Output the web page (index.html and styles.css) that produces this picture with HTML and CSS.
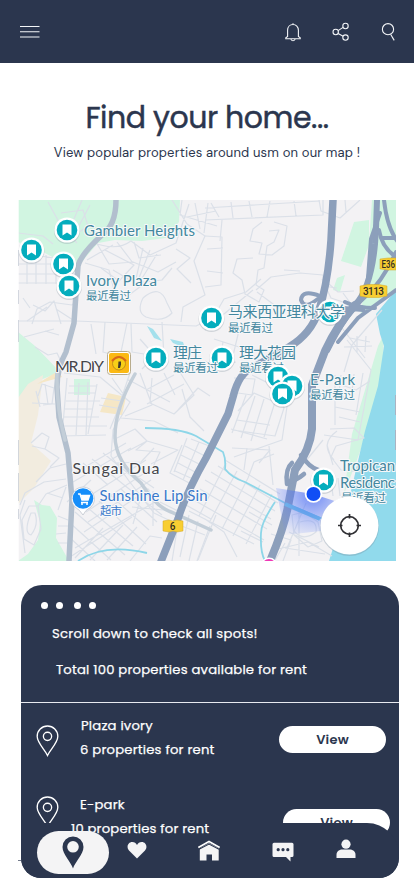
FILE: index.html
```html
<!DOCTYPE html>
<html lang="en">
<head>
<meta charset="utf-8">
<title>Find your home</title>
<link rel="stylesheet" href="styles.css">
</head>
<body>
<header class="topbar">
  <svg class="menu" viewBox="0 0 20 14"><path d="M0 1.5h19.5M0 6.8h19.5M0 12h19.5"/></svg>
  <div class="actions">
    <svg width="18" height="20" viewBox="0 0 18 20"><path d="M9 1.2v1.2M3.6 14.5V8.2C3.600 4.700 6 2.500 9 2.500s5.400 2.200 5.400 5.700v6.300l1.800 1.200v1H1.800v-1zM6.800 17c.5 2.300 3.900 2.300 4.400 0"/></svg>
    <svg width="18" height="20" viewBox="0 0 18 20"><circle cx="3.700" cy="10" r="2.700"/><circle cx="13.500" cy="4" r="2.700"/><circle cx="13.500" cy="15.600" r="2.700"/><path d="M6.100 8.600l5-3.200M6.100 11.400l5 2.800"/></svg>
    <svg width="18" height="20" viewBox="0 0 18 20"><circle cx="8" cy="7.200" r="5.600"/><path d="M10.600 12.200l3.600 6.200"/></svg>
  </div>
</header>
<main>
  <h1 class="title"><span>Find your home...</span></h1>
  <p class="subtitle">View popular properties around usm on our map !</p>
  <svg class="map" viewBox="18 200 378 361">
    <defs>
      <g id="pin"><circle r="13" cy="1" fill="#8c9ba5" opacity=".35"/><circle r="12.600" fill="#fff"/><circle r="10.300" fill="#04adbd"/><path d="M-4.500-5.500h9v11L0 2.500l-4.500 3z" fill="#fff"/></g>
      <radialGradient id="beam" gradientUnits="userSpaceOnUse" cx="313" cy="494" r="48"><stop offset="0" stop-color="#3d63f5" stop-opacity=".75"/><stop offset="1" stop-color="#6f8cf8" stop-opacity=".05"/></radialGradient>
    </defs>
    <rect x="18" y="200" width="378" height="361" fill="#f3f2f4"/>
    <g fill="#d1f5e1">
      <path d="M18 200H180L179 222 166 238 142 241 115 240 98 243 85 258 75 272 65 264 45 253 18 242z"/>
      <path d="M18 332l17 14 25 26-32 13-10 14z"/>
      <path d="M34 500l8 5 8 1 7 12-1 20 13 23H18l10-7 10-14 2-18z"/>
      <path d="M354 222l15-2v25l-8 22-20-6zM337 278l8-3-5 17-7-2zM372 200h24v88l-36 30 7-45zM378 346l6-12-2 45-21 70-17 45 8-60z"/>
      <path d="M74 379h16v16H74z"/>
    </g>
    <path d="M28 384l15-9-5 40-7 28 20 18-17 27-16 16V398z" fill="#f2ecdf"/>
    <path d="M108 393l18 4-4 18-22-3zM37 384l25-7-4-6z" fill="#f5e7c6"/>
    <path d="M396 290l-20 24 4 20 4 12-6 40-13 45-14 60-22 70h67z" fill="#91daec"/>
    <path d="M147 326l6 3 9 12-8-3zM170 339l13 3 2 6-12-5z" fill="#a4e0ec"/>
    <g class="street">
      <path d="M18 233l25 3 10 8M48 202l12 22 17 19M61 213l22-3 5 16-20 14M82 200l-11 26M20 253l47 7M18 264h56M18 274h57M18 283h55M27 250v34M36 253v31M46 255v29M56 257v27M65 257v27M90 205l-18 34"/>
      <path d="M18 321h58l120 5 17-8 11-19 22-7 15-13M92 242q24 10 39-1l19 14 26-12 13-39M87 260l26-15M96 242l13 22 24-2 25 10 18-10M105 250l29 15-15 16-18-13M117 242l16 21M134 242l5 16 22-3M143 248l-7 31M150 250l-11 28M157 254l-16 26M176 249l14 9-13 11 14 14M162 233l24-4M172 200l15 24 18 12-11 25 11 34-22 12-2 15M182 200l-2 15 37 11M187 217l29-6M195 203l5 26M208 203l-4 30"/>
      <path d="M78 300l-6 5-22-3-13 7-5 15M33 305l12 6 9-10 7 23M30 308l-7-10M27 321l20-14M56 309l17 11M85 263l24 7 5 20 15 5 23-17M113 270l22 13 27-3 10-12M143 298q17-15 24 5l5 10q-9 10-26 4-10-5-3-19M105 322l-2 30 17 5 7-34M91 324l5 30M131 324l1 28 24 4M162 322l2 35M140 339l15 17-13 13M35 347l13 8 9-2 7 15M45 331l14 4M24 337l30-8"/>
      <path d="M205 220l118-5v-15M205 208l115-7M211 203l8 14M231 202l2 16M249 201l3 16M270 201l-3 16M294 201l2 15M205 236l17 1-1 48-16 2M207 249l16-1M207 271l16 2M222 220l-2 21M262 222l-9 7-3 12 12 2-3 11 13 1 12-9 3-20-13-4M269 231l10-1-5 12-7 4-3 22-6 2-2 15 8 5-5 12-14-8-3-14-9-7 4-14 16-1M256 290l15-13 29-4 23 2v11l14 2M257 292l20 15 23 10M204 323l20-9 29-24M284 270l16 1"/>
      <path d="M205 330l13-7M214 339l25 8 20 13M223 342l-5 28M240 326l-8 34M205 361l13 5 18-4M350 338l20 4M344 347l28-1M357 336v16M366 336l-1 16M319 200l2 11 19 7 20-18M345 200l1 12M322 279l9 19 18 6M329 284l9 8 16-1M343 293l11 15M382 310l-30 35-8 27M332 315l33 43M347 340l24 30-13 70-34-5"/>
      <path d="M64 373l36 4 30 25-17 28-2 26 18 25 25 32 25 12 26 10M67 378l-5 58 44-1M69 386h28M68 393h27M66 401h34M65 409h28M64 417h35M63 426h44M79 383l-3 52M88 382l-2 53M97 384l-9 50M101 398l21 3M99 405l23 4M112 378l12 17-14 34M130 373l-13 38-3 28M140 373l12 32-27 11M152 378l-2 25 24 11 20-19-16-26M121 418l33 3 24 12M164 373l11 22M146 390l28-15M147 404l37-20M127 379l43 23M178 410l20-22 12 8M182 389l8 28 14 14M117 438l18-9 12 12-11 9 24 2-7 15M128 451l19-10 31 9-27 14M116 463l25-1 13-14"/>
      <path d="M38 396l4-12 12 4-2 16-9 1M32 403l23 1M36 391l4 16M45 384l3 20M31 443l11-10 7 4-4 12-13-3M45 449l14 9-9 9M36 482l14-14 16-4M20 505l5-12 19-11 22-3M25 500l-5 15 5 38M29 506l-7 14 2 19 10 6 7-16-3-23-9 0M31 513q-8 20 0 22 8-10 4-22zM38 506l8-12 21-9M47 493l16 5M58 510l8-23M56 534l10-1M58 516l10 4M58 526h12M58 543h12"/>
      <path d="M73 474l53-31M73 482l58-34M83 500l63-40M86 512l66-44M88 522l63-42M84 532l65-43M75 548l80-46M70 557l62-40M83 463l25 22M92 459l47 38M103 453l47 38M117 463l37 25M91 480l-24 22M82 503l51 43M75 512l50 43M70 523l41 37M68 536l27 25M99 501l47 43M109 494l40 36M121 489l36 33M137 495l25 20M75 558l28-30M90 560l33-35M107 560l30-33M130 561l20-25 12 2M132 507l32 3M140 500l-7 24M153 491v35M160 502l18 9 8-6 25 14M180 511l-8 50M189 515l-9 42M198 521l-9 40M210 526l-13 35"/>
      <path d="M191 439l21 8-17 39-25-13 12-28M185 446l20 10M181 455l20 10M178 463l19 10M175 471l18 8M187 438l-13 34M199 442l-16 38M208 447l-16 37"/>
      <path d="M242 367l30 8 16 25-6 40-48 17M234 378l21 1-3 16-21-3M252 375l26 13 6 20-9 28-42-6M238 411l16-18 21 9-11 35M237 420l33 5M231 429l36 10M246 395l-14 38M255 396l-14 42M264 399l-13 42M232 448l38 2-11 13M225 460l55 34M218 466l60 37M211 472l64 39M205 480l66 39M200 489l67 40M194 500l70 40M189 511l65 33M226 463l-27 53M237 471l-28 52M248 478l-26 51M260 485l-27 51M272 494l-26 50M269 446l4 39M247 448l-3 22M274 454l-20 8-6 16M205 519l19 13 13 25M216 515l-18 45M241 531l22 11M249 512l23 13"/>
      <path d="M335 375v50M336 383l20 7 14-9M335 393l15 7M341 375l-2 18M354 374l-3 26M363 373l-7 42M335 407l25 5M339 417l21 5M330 429l24-1 10 10-28 8-5 11 10 13 20 2M337 431q-18 13-3 29M323 440l-18 22M327 445l6 20M310 466l20 5 3 25M292 515l12-3 14 10 4 19-14 6-14-12zM289 532l30 15M299 511v45M306 503l-19 45M285 548l40 6M278 549l30-7 24 14M275 560l10-17M338 478l2 18M300 522q18-5 16 10-13 10-22-1M271 534l20 6-8 21M283 506l35 12"/>
    </g>
    <g class="canal"><path d="M145 428q35 0 51 8l27 16q3 7 2 17 7 9 20 13l40 21 45 19M78 561q26-18 69-8M275 502q-14 21-14 31-1 19 4 28"/></g>
    <g class="artery">
      <path d="M116 200q0 25-14 35-21 19-24 31l-2 27-2 30-8 29q-9 16-9 35l2 30 9 36 4 47-3 61" stroke-width="5.500" stroke="#b2bfce"/>
      <path d="M57 372q-1 34 8 68M135 374q-20 35-20 62 0 25 26 47 15 24 30 29l40 18" stroke-width="3.500" stroke="#c3ced8"/>
      <path d="M333 200l-2 40q-3 43-12 70-8 24-30 37l-35 20q-15 5-21 30l-5 17-22 44q-20 35-28 61l-18 45" stroke-width="7.500"/>
      <path d="M355 305q-18 20-30 46l-13 34v44q-2 21-17 41l-6 31q-4 25-19 60" stroke-width="8"/>
      <path d="M377 200l-1 28-1 16q-4 44-20 61" stroke-width="6"/>
      <path d="M384 200q3 28 14 42M379 230q3 19 19 28M367 291l4-52 9-26M382 238h15M396 252q-14 30-30 44-20 18-38 55M396 290l-38 28-20 24M319 304q20 4 44 6M320 296q-18-7-19 4 3 9 14 1l8-6M345 302q12 6 30 6" stroke-width="4"/>
      <path d="M301 455q8 12 17 15M292 463q-7 6-5 21M287 482q9-1 17-8" stroke-width="4.500"/>
    </g>
    <path d="M285 504l35 15" stroke="#75c9e4" stroke-width="4"/>
    <path d="M313 494L276 488 285 535 330 530 344 504z" fill="url(#beam)"/>
    <use href="#pin" x="67" y="230"/><use href="#pin" x="31.500" y="250"/><use href="#pin" x="63.500" y="264"/><use href="#pin" x="69" y="286"/>
    <use href="#pin" x="211.500" y="318"/><use href="#pin" x="156" y="358"/><use href="#pin" x="222" y="358"/><use href="#pin" x="330" y="312"/>
    <g class="place">
      <text x="84" y="235.500" textLength="111">Gambier Heights</text>
      <text x="86" y="285.500" textLength="71">Ivory Plaza</text>
      <text x="86" y="300" class="recent" textLength="45">最近看过</text>
      <text x="228" y="317" textLength="117">马来西亚理科大学</text>
      <text x="228" y="331.500" class="recent" textLength="45">最近看过</text>
      <text x="173" y="357.500" textLength="29">理庄</text>
      <text x="173" y="371.500" class="recent" textLength="45">最近看过</text>
      <text x="239" y="357.500" textLength="57">理大花园</text>
      <text x="239" y="371.500" class="recent" textLength="45">最近看过</text>
      <text x="310" y="385" textLength="45">E-Park</text>
      <text x="310" y="399" class="recent" textLength="45">最近看过</text>
      <text x="340" y="471" textLength="55">Tropican</text>
      <text x="340" y="488" textLength="55">Residenc</text>
      <text x="341" y="502" class="recent" textLength="45">最近看过</text>
      <g class="shop"><text x="99.500" y="500.500" textLength="108">Sunshine Lip Sin</text><text x="100" y="515" class="recent" textLength="22">超市</text></g>
      <g class="town"><text x="55" y="371.500" textLength="49">MR.DIY</text><text x="72.500" y="474" textLength="87">Sungai Dua</text></g>
    </g>
    <use href="#pin" x="278" y="377"/><use href="#pin" x="292" y="386"/><use href="#pin" x="282.500" y="394"/><use href="#pin" x="323.500" y="480"/>
    <circle cx="313.500" cy="494" r="8.800" fill="#fff"/><circle cx="313.500" cy="494" r="7" fill="#114ef5"/>
    <rect x="107.500" y="351.500" width="23" height="23" rx="3" fill="#fff" stroke="#b8ac8d"/><rect x="109" y="353" width="20" height="20" rx="2" fill="#fbb914"/>
    <circle cx="119" cy="363.500" r="6.500" fill="#f7cf18" stroke="#b5801c" stroke-width=".8"/><path d="M112 361q7-8 14 0" fill="none" stroke="#d8681c" stroke-width="2"/><path d="M118 368l.5-6.500h2.500v3l-1 3.500" fill="#40392b"/>
    <path d="M83 487a11.800 11.800 0 0 1 8 20q-6 3-8 8-3-5-8-8a11.800 11.800 0 0 1 8-20z" fill="#fff" stroke="#b9bfc9" stroke-width=".7"/><circle cx="83" cy="498.500" r="10.300" fill="#168efa"/><path d="M78 494h2l2 6h6l1.500-4.500h-9M81 502.500h7" stroke="#fff" stroke-width="1.500" fill="none"/><path d="M81 495.500h8.500L88 500h-6z" fill="#fff"/><circle cx="82" cy="504" r="1" fill="#fff"/><circle cx="87" cy="504" r="1" fill="#fff"/>
    <g class="badge">
      <path d="M163 521l6-1 4 1 4-1 6 1v10l-6 1-4-1-4 1-6-1zM360 286l8-1.500h11l8 1.500v10l-8 1.500h-11l-8-1.500zM380 259l8-1h8v12h-8l-8-1z"/>
      <text x="172.500" y="529.800" text-anchor="middle">6</text><text x="373.500" y="294.800" text-anchor="middle" textLength="21">3113</text><text x="381.500" y="268" textLength="13.500" lengthAdjust="spacingAndGlyphs">E36</text>
    </g>
    <circle cx="269" cy="566" r="8.500" fill="#fff"/><circle cx="269" cy="566" r="7" fill="#ef38b6"/>
    <circle cx="349.500" cy="526.500" r="29.500" fill="#7890a0" opacity=".35"/><circle cx="349.500" cy="525.500" r="29" fill="#fff"/>
    <g fill="none" stroke="#303034" stroke-width="1.700"><circle cx="349.500" cy="525.500" r="8.800"/><path d="M349.500 514v4.500M349.500 532.500v4.500M338 525.500h4.500M356.500 525.500h4.500"/></g>
    <path d="M18 200v361" stroke="#fff" stroke-width="1.400"/><path d="M18 250v16M18 290v14M18 320v22M18 440v25M18 473v28M18 509v10M395.500 395v20M395.500 430v20" stroke="#aab3c2"/>
  </svg>
  <section class="card">
    <div class="summary">
      <div class="dots"><i></i><i></i><i></i><i></i></div>
      <p class="hint">Scroll down to check all spots!</p>
      <p class="total">Total 100 properties available for rent</p>
    </div>
    <div class="row">
      <svg class="marker" viewBox="0 0 22 31"><path d="M11 29.500C8.500 24 1 17.500 1 11a10 10 0 0 1 20 0c0 6.500-7.500 13-10 18.500z"/><circle cx="11" cy="11" r="4"/></svg>
      <div class="info"><p class="name-ivory">Plaza ivory</p><p class="count-six">6 properties for rent</p></div>
      <button class="view">View</button>
    </div>
    <div class="row second">
      <svg class="marker" viewBox="0 0 22 31"><path d="M11 29.500C8.500 24 1 17.500 1 11a10 10 0 0 1 20 0c0 6.500-7.500 13-10 18.500z"/><circle cx="11" cy="11" r="4"/></svg>
      <div class="info"><p class="name-epark">E-park</p><p class="count-ten">10 properties for rent</p></div>
      <button class="view">View</button>
    </div>
    <nav class="tabs">
      <a class="active"><svg width="22" height="33" viewBox="0 0 22 33"><path fill-rule="evenodd" d="M11 32.500C9 26 .5 18 .5 11a10.500 10.500 0 0 1 21 0c0 7-8.500 15-10.500 21.500zM11 5a5.800 5.800 0 1 0 0 11.600A5.800 5.800 0 0 0 11 5z"/></svg></a>
      <a class="heart"><svg width="20" height="18" viewBox="0 0 20 18"><path d="M10 17.500L2 9.500C-1 6 1 1 5.300 1 7.500 1 9 2 10 4c1-2 2.500-3 4.700-3C19 1 21 6 18 9.500z"/></svg></a>
      <a class="home"><svg width="24" height="21" viewBox="0 0 24 21"><path d="M12 3.200l9.700 5v12.300H15v-6H9.500v6H2.800V8.200z"/><path class="roof" d="M1.300 7.500L12 1.500l10.700 6"/><path class="eave" d="M2 9.300L12 4l10 5.300"/></svg></a>
      <a class="chat"><svg width="22" height="20" viewBox="0 0 22 20"><path d="M2 .8h18a1.500 1.500 0 0 1 1.500 1.500v11.200A1.500 1.500 0 0 1 20 15h-1.500v4.600L14 15H2A1.500 1.500 0 0 1 .5 13.500V2.300A1.500 1.500 0 0 1 2 .8z"/><g class="ink"><circle cx="6.200" cy="7.700" r="1.600"/><circle cx="11" cy="7.700" r="1.600"/><circle cx="15.800" cy="7.700" r="1.600"/></g></svg></a>
      <a class="user"><svg width="20" height="20" viewBox="0 0 20 20"><circle cx="10" cy="5.200" r="4.600"/><path d="M.5 19v-3c0-4 3-5.500 6-5.500h7c3 0 6 1.500 6 5.500v3z"/></svg></a>
    </nav>
  </section>
</main>
</body>
</html>
```
FILE: styles.css
```css
* { box-sizing: border-box; }
body { margin: 0; width: 414px; height: 896px; overflow: hidden; background: #fff; color: #2b364e; font-family: Poppins, Inter, "Noto Sans CJK SC", sans-serif; }
p, h1 { margin: 0; white-space: nowrap; }
svg { display: block; flex: none; }

.topbar { height: 63px; background: #2b364e; display: flex; align-items: center; justify-content: space-between; padding: 0 16px 0 20px; }
.topbar svg { fill: none; stroke: #f3f5f8; stroke-width: 1.1; }
.menu { width: 20px; height: 14px; margin-top: 1px; }
.actions { display: flex; gap: 30px; }

.title { margin-top: 32px; height: 46px; line-height: 46px; text-align: center; font-size: 30px; font-weight: 400; letter-spacing: -.48px; -webkit-text-stroke: .45px #2b364e; }
.subtitle { height: 20px; margin-top: 2px; line-height: 20px; text-align: center; font-family: "DM Sans", Inter, sans-serif; font-size: 13px; letter-spacing: .16px; }

main { position: relative; }
main::after { content: ""; position: absolute; left: 18px; top: 765px; width: 3px; height: 1px; background: #737b8b; }

.map { width: 378px; height: 361px; margin: 37px 0 0 18px; overflow: hidden; }
.street { fill: none; stroke: #dbe0e8; stroke-width: 1.2; stroke-linejoin: round; }
.canal { fill: none; stroke: #8dd6e8; stroke-width: 1.8; }
.artery { fill: none; stroke: #8c9fbb; stroke-linecap: round; }
.place { font-family: Lato, "Noto Sans CJK SC", sans-serif; font-size: 15px; font-weight: 400; fill: #43879e; stroke: #f7f8fa; stroke-width: 2.2px; paint-order: stroke; stroke-linejoin: round; }
.place .recent { font-size: 11.5px; }
.place .shop { fill: #3978ca; }
.place .town { fill: #46464a; font-size: 16px; }
.badge { fill: #f8ce32; stroke: #d2a624; stroke-width: .5; }
.badge text { fill: #332e22; stroke: none; font-family: Roboto, sans-serif; font-size: 10px; font-weight: 500; }

.card { position: relative; width: 378px; height: 293px; margin: 24px 0 0 21px; border-radius: 21px 21px 20px 20px; background: #2b364e; color: #fff; overflow: hidden; font-size: 13.2px; font-weight: 400; -webkit-text-stroke: .25px; }
.summary { height: 118px; border-bottom: 1px solid #e8eaf0; padding-top: 17px; }
.dots { display: flex; height: 8px; padding-left: 20px; gap: 8px; }
.dots i { width: 7px; height: 7px; border-radius: 50%; background: #fff; }
.dots i:nth-child(3) { margin-left: 3px; }
.hint { line-height: 20px; margin: 14px 0 0 31px; letter-spacing: .26px; }
.total { line-height: 20px; margin: 16px 0 0 35px; letter-spacing: .2px; }

.row { display: flex; height: 79px; padding: 11px 13px 0 15px; }
.marker { width: 23px; height: 32px; margin-top: 11px; fill: none; stroke: #fff; stroke-width: 1.3; }
.info { position: relative; z-index: 2; padding-left: 21px; }
.info p { line-height: 24px; }
.name-ivory { margin-left: 1px; letter-spacing: .2px; }
.count-six { letter-spacing: .2px; }
.name-epark { letter-spacing: .2px; }
.info .count-ten { margin-left: -9px; letter-spacing: .17px; }
.view { width: 107px; height: 27px; margin: 12px 0 0 auto; border: 0; border-radius: 14px; padding: 0; background: #fff; color: #2b364e; font: 600 13px/27px Poppins, Inter, sans-serif; letter-spacing: .2px; -webkit-text-stroke: 0; }
.second { padding-right: 9px; }
.second .marker { margin-top: 3px; }
.second .view { margin-top: 16px; }

.tabs { position: absolute; inset: 238px 0 0 0; display: flex; align-items: flex-start; fill: #f4f4f5; }
.tabs::before { content: ""; position: absolute; z-index: 1; inset: 0; border-radius: 0 32px 20px 20px; background: #2b364e; }
.tabs a { position: relative; z-index: 3; margin-top: 20px; }
.tabs .active { width: 72px; height: 43px; margin: 8px 0 0 16px; border-radius: 22px; background: #f4f4f5; fill: #2b364e; display: flex; justify-content: center; padding-top: 5px; }
.tabs .heart { margin: 18px 0 0 18px; }
.tabs .home { margin: 17px 0 0 50px; }
.tabs .chat { margin: 19px 0 0 51px; }
.tabs .user { margin: 16px 0 0 42px; }
.roof, .eave { fill: none; stroke: #fff; stroke-width: 1.6; }
.eave { stroke: #2b364e; stroke-width: 1.1; }
.ink { fill: #2b364e; }
```
